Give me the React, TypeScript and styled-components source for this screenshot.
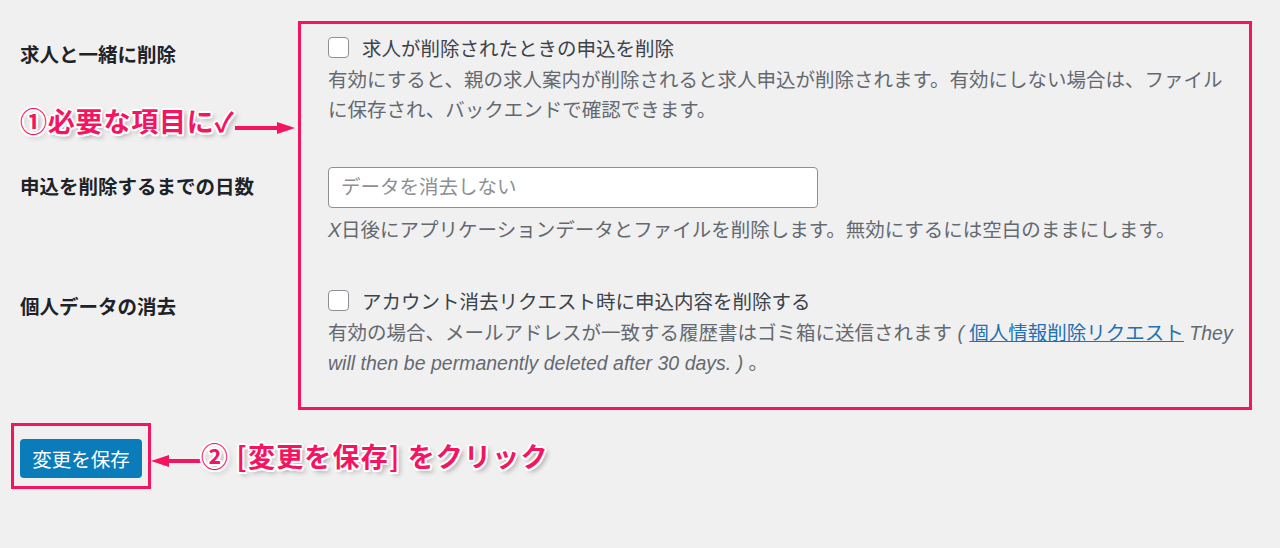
import React from "react";
import styled, { createGlobalStyle } from "styled-components";

const PINK = "#f5145f";

const GlobalStyle = createGlobalStyle`
  html, body {
    margin: 0;
    padding: 0;
    background: #f0f0f1;
  }
  body {
    font-family: "Liberation Sans", "Noto Sans CJK JP", sans-serif;
    color: #3c434a;
  }
`;

const Page = styled.div`
  width: 1280px;
  height: 548px;
  padding-top: 21px;
  box-sizing: border-box;
  overflow: hidden;
`;

const FormGrid = styled.div`
  display: grid;
  grid-template-columns: 278px 954px;
  grid-template-rows: 125px 119px 145px;
  padding-left: 20px;
`;

const Highlight = styled.div`
  grid-column: 2;
  grid-row: 1 / 4;
  border: 3px solid ${PINK};
  pointer-events: none;
`;

const LabelCell = styled.div<{ $row: number; $top: number }>`
  grid-column: 1;
  grid-row: ${(p) => p.$row};
  padding-top: ${(p) => p.$top}px;
  display: flex;
  flex-direction: column;
`;

const Label = styled.div`
  font-size: 19.5px;
  line-height: 30px;
  font-weight: 700;
  color: #1d2327;
`;

const FieldCell = styled.div<{ $row: number; $top: number }>`
  grid-column: 2;
  grid-row: ${(p) => p.$row};
  padding: ${(p) => p.$top}px 11px 0 30px;
  display: flex;
  flex-direction: column;
  align-items: flex-start;
`;

const CheckRow = styled.label`
  display: flex;
  align-items: center;
  gap: 13px;
  height: 30px;
  font-size: 19.5px;
  color: #3c434a;
`;

const Checkbox = styled.input`
  appearance: none;
  margin: 0;
  width: 21px;
  height: 21px;
  border: 1.5px solid #8c8f94;
  border-radius: 4px;
  background: #ffffff;
  box-sizing: border-box;
`;

const Desc = styled.p<{ $gap?: number }>`
  margin: ${(p) => p.$gap ?? 3}px 0 0;
  font-size: 19.5px;
  line-height: 30px;
  color: #646970;

  em, i {
    font-style: italic;
  }
`;

const Link = styled.a`
  color: #2271b1;
  text-decoration: underline;
  font-style: normal;
`;

const TextInput = styled.input`
  width: 490px;
  height: 41px;
  box-sizing: border-box;
  border: 1px solid #8c8f94;
  border-radius: 4px;
  background: #ffffff;
  padding: 0 12px;
  font-family: "Liberation Sans", "Noto Sans CJK JP", sans-serif;
  font-size: 19.5px;
  color: #2c3338;
  outline: none;

  &::placeholder {
    color: #8c8f94;
  }
`;

const Note = styled.div`
  display: flex;
  align-items: center;
  height: 34px;
  margin-top: 34px;
`;

const NoteText = styled.span<{ $spacing: number }>`
  font-family: "Noto Sans CJK JP", sans-serif;
  font-weight: 700;
  font-size: 27px;
  line-height: 34px;
  letter-spacing: ${(p) => p.$spacing}px;
  color: ${PINK};
  white-space: nowrap;
  text-shadow: 2px 0 #fff, -2px 0 #fff, 0 2px #fff, 0 -2px #fff,
    1.5px 1.5px #fff, -1.5px -1.5px #fff, 1.5px -1.5px #fff,
    -1.5px 1.5px #fff, 3px 3px 5px rgba(0, 0, 0, 0.35);
`;

const ArrowSvg = styled.svg<{ $shift: number }>`
  flex: none;
  margin-top: ${(p) => p.$shift}px;
`;

const SubmitRow = styled.div`
  display: flex;
  align-items: center;
  margin-top: 13px;
  padding-left: 11px;
`;

const SubmitHighlight = styled.div`
  border: 3px solid ${PINK};
  padding: 13px 6px 8px;
`;

const SaveButton = styled.button`
  display: block;
  width: 122px;
  height: 39px;
  border: none;
  border-radius: 4px;
  background: #0a7cba;
  color: #ffffff;
  font-family: "Liberation Sans", "Noto Sans CJK JP", sans-serif;
  font-size: 19.5px;
  padding: 0;
  cursor: pointer;
`;

const Arrow = ({ width, dir, shift }: { width: number; dir: "left" | "right"; shift: number }) => (
  <ArrowSvg $shift={shift} width={width} height={14} viewBox={`0 0 ${width} 14`}>
    {dir === "right" ? (
      <>
        <rect x={0} y={5} width={width - 14} height={4} fill={PINK} />
        <polygon points={`${width - 18},1 ${width},7 ${width - 18},13`} fill={PINK} />
      </>
    ) : (
      <>
        <rect x={14} y={5} width={width - 14} height={4} fill={PINK} />
        <polygon points="18,1 0,7 18,13" fill={PINK} />
      </>
    )}
  </ArrowSvg>
);

const App = () => {
  return (
    <Page>
      <GlobalStyle />
      <FormGrid>
        <Highlight />

        <LabelCell $row={1} $top={19}>
          <Label>求人と一緒に削除</Label>
          <Note>
            <NoteText $spacing={0.8}>①必要な項目に✓</NoteText>
            <Arrow width={60} dir="right" shift={14} />
          </Note>
        </LabelCell>
        <FieldCell $row={1} $top={11}>
          <CheckRow>
            <Checkbox type="checkbox" />
            求人が削除されたときの申込を削除
          </CheckRow>
          <Desc>
            有効にすると、親の求人案内が削除されると求人申込が削除されます。有効にしない場合は、ファイルに保存され、バックエンドで確認できます。
          </Desc>
        </FieldCell>

        <LabelCell $row={2} $top={26}>
          <Label>申込を削除するまでの日数</Label>
        </LabelCell>
        <FieldCell $row={2} $top={21}>
          <TextInput type="text" placeholder="データを消去しない" />
          <Desc $gap={7}>
            <i>X</i>日後にアプリケーションデータとファイルを削除します。無効にするには空白のままにします。
          </Desc>
        </FieldCell>

        <LabelCell $row={3} $top={27}>
          <Label>個人データの消去</Label>
        </LabelCell>
        <FieldCell $row={3} $top={20}>
          <CheckRow>
            <Checkbox type="checkbox" />
            アカウント消去リクエスト時に申込内容を削除する
          </CheckRow>
          <Desc>
            有効の場合、メールアドレスが一致する履歴書はゴミ箱に送信されます
            <em>
              {" ( "}
              <Link href="#">個人情報削除リクエスト</Link>
              {" They will then be permanently deleted after 30 days. )"}
            </em>
            {" 。"}
          </Desc>
        </FieldCell>
      </FormGrid>

      <SubmitRow>
        <SubmitHighlight>
          <SaveButton>変更を保存</SaveButton>
        </SubmitHighlight>
        <Arrow width={50} dir="left" shift={10} />
        <NoteText $spacing={1.2}>② [変更を保存] をクリック</NoteText>
      </SubmitRow>
    </Page>
  );
};

export default App;
